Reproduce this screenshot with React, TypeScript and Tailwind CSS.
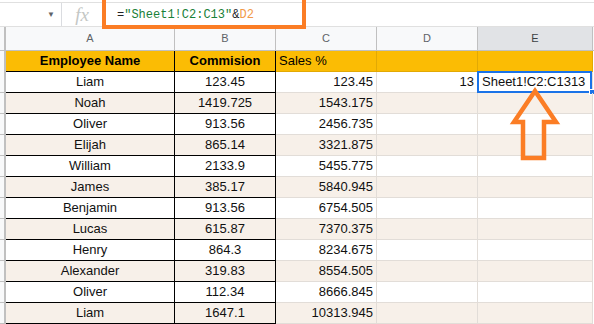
import React from "react";

const rows: [string, string, string][] = [
  ["Liam", "123.45", "123.45"],
  ["Noah", "1419.725", "1543.175"],
  ["Oliver", "913.56", "2456.735"],
  ["Elijah", "865.14", "3321.875"],
  ["William", "2133.9", "5455.775"],
  ["James", "385.17", "5840.945"],
  ["Benjamin", "913.56", "6754.505"],
  ["Lucas", "615.87", "7370.375"],
  ["Henry", "864.3", "8234.675"],
  ["Alexander", "319.83", "8554.505"],
  ["Oliver", "112.34", "8666.845"],
  ["Liam", "1647.1", "10313.945"],
];

function FormulaBar() {
  return (
    <div className="relative h-[27px] pt-[2px] bg-white">
      <div className="flex h-full border-t border-b border-[#e0e0e0]">
        <div className="w-[62px] flex items-center justify-end pr-[6px] border-r border-[#dadce0]">
          <span className="text-[8px] text-[#5f6368]">▼</span>
        </div>
        <div className="w-[40px] flex items-center justify-center">
          <span className="italic text-[19px] text-[#c4c7c5] [font-family:'Liberation_Serif',serif] leading-none">fx</span>
        </div>
        <div className="flex-1 flex items-center pl-[15px] text-[12px] [font-family:'Liberation_Mono',monospace]">
          <span className="text-[#202124]">=</span>
          <span className="text-[#188038]">"Sheet1!C2:C13"</span>
          <span className="text-[#202124]">&amp;</span>
          <span className="text-[#f29a49]">D2</span>
        </div>
      </div>
      <div className="absolute left-[102px] top-[-4px] w-[204px] h-[33px] border-[4px] border-[#fb7d25]" />
    </div>
  );
}

function ColHeader() {
  const cols = [
    { l: "A", w: "w-[169px]", sel: false },
    { l: "B", w: "w-[101px]", sel: false },
    { l: "C", w: "w-[101px]", sel: false },
    { l: "D", w: "w-[101px]", sel: false },
    { l: "E", w: "w-[115px]", sel: true },
  ];
  return (
    <div className="flex h-[24px] border-b border-[#c0c0c0] bg-[#f8f9fa]">
      <div className="w-[6px] border-r-[2px] border-[#c0c0c0]" />
      {cols.map((c) => (
        <div
          key={c.l}
          className={`${c.w} flex items-center justify-center border-r border-[#c0c0c0] text-[11px] ${c.sel ? "bg-[#e1e3e6] text-[#3c4043]" : "text-[#5f6368]"}`}
        >
          {c.l}
        </div>
      ))}
      <div className="flex-1" />
    </div>
  );
}

function HeaderRow() {
  return (
    <div className="flex h-[21px] bg-[#fbbc04] text-[13px] text-black">
      <div className="w-[6px] bg-[#f8f9fa] border-r-[2px] border-[#c0c0c0]" />
      <div className="w-[169px] flex items-center justify-center font-bold border-r border-b border-black">Employee Name</div>
      <div className="w-[101px] flex items-center justify-center font-bold border-r border-b border-black">Commision</div>
      <div className="w-[101px] flex items-center pl-[3px] border-r border-b border-[#e2a904]">Sales %</div>
      <div className="w-[101px] border-r border-b border-[#e2a904]" />
      <div className="w-[115px] border-r border-b border-[#e2a904]" />
      <div className="flex-1 bg-white" />
    </div>
  );
}

function DataRow({ r, i }: { r: [string, string, string]; i: number }) {
  const band = i % 2 === 1 ? "bg-[#f7f0e9]" : "bg-white";
  return (
    <div className={`flex h-[21px] text-[13px] text-[#111] ${band}`}>
      <div className="w-[6px] bg-[#f8f9fa] border-r-[2px] border-b border-[#c0c0c0]" />
      <div className="w-[169px] flex items-center justify-center border-r border-b border-black">{r[0]}</div>
      <div className="w-[101px] flex items-center justify-center border-r border-b border-black">{r[1]}</div>
      <div className="w-[101px] flex items-center justify-end pr-[3px] border-r border-b border-[#e2ddd8]">{r[2]}</div>
      <div className="w-[101px] flex items-center justify-end pr-[3px] border-r border-b border-[#e2ddd8]">{i === 0 ? "13" : ""}</div>
      <div className="relative w-[115px] flex items-center pl-[4px] border-r border-b border-[#e2ddd8]">
        {i === 0 && (
          <>
            <span>Sheet1!C2:C1313</span>
            <div className="absolute left-[-1px] top-[-1px] right-[0px] bottom-[-1px] border-2 border-[#1a73e8]" />
            <div className="absolute right-[-3px] bottom-[-3px] w-[6px] h-[6px] bg-[#1a73e8] border border-white" />
          </>
        )}
      </div>
      <div className="flex-1 bg-white" />
    </div>
  );
}

export default function App() {
  return (
    <div className="relative w-[594px] h-[324px] overflow-hidden bg-white [font-family:'Liberation_Sans',Arial,sans-serif]">
      <FormulaBar />
      <ColHeader />
      <HeaderRow />
      {rows.map((r, i) => (
        <DataRow key={i} r={r} i={i} />
      ))}
      <svg className="absolute left-[505px] top-[84px]" width="60" height="80" viewBox="0 0 60 80">
        <path
          d="M30 7 L51 38 L39 38 L39 74 L18 74 L18 38 L9 38 Z"
          fill="none"
          stroke="#fb7d25"
          strokeWidth="4.5"
          strokeLinejoin="miter"
        />
      </svg>
    </div>
  );
}
